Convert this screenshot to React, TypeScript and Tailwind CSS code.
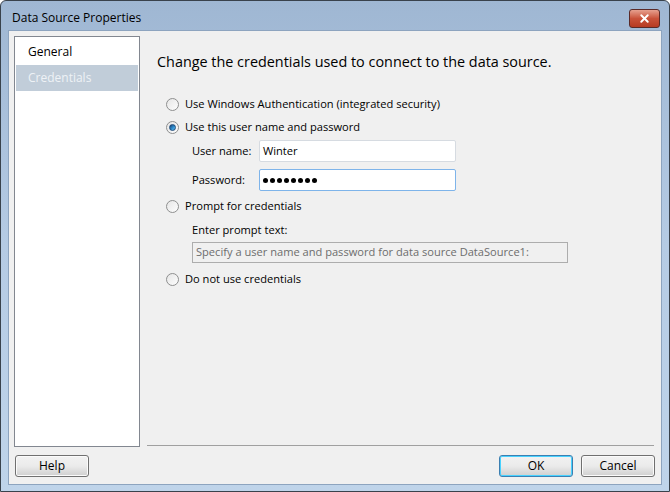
import { X } from 'lucide-react';

const Radio = ({ checked }: { checked?: boolean }) => (
  <span className="w-[13px] h-[13px] rounded-full border border-[#8e8f8f] bg-gradient-to-br from-[#e6e6e6] to-[#fdfdfd] flex items-center justify-center shrink-0">
    {checked && (
      <span className="w-[7px] h-[7px] rounded-full bg-gradient-to-br from-[#1a3e6b] via-[#2a86c8] to-[#5fc1f2] border border-[#1d4a7a]" />
    )}
  </span>
);

const WinButton = ({ label, focused, className = '' }: { label: string; focused?: boolean; className?: string }) => (
  <div
    className={`w-[74px] h-[22px] rounded-[3px] border flex items-center justify-center text-[12px] text-black ${
      focused
        ? 'border-[#3c7fb1] shadow-[inset_0_0_0_1px_#48d2ff] bg-gradient-to-b from-[#f2f2f2] via-[#ebebeb] to-[#cfcfcf]'
        : 'border-[#707070] shadow-[inset_0_0_0_1px_#fbfbfb] bg-gradient-to-b from-[#f2f2f2] via-[#ebebeb] to-[#cfcfcf]'
    } ${className}`}
  >
    {label}
  </div>
);

const dots = [0, 1, 2, 3, 4, 5, 6, 7];

export default function App() {
  return (
    <div
      className="w-[670px] h-[492px] flex flex-col border border-[#39424c] rounded-t-[6px] bg-gradient-to-b from-[#9fb7d3] via-[#b5cbe4] to-[#bfd4ea] overflow-hidden"
      style={{ fontFamily: '"Open Sans", "Liberation Sans", sans-serif' }}
    >
      {/* Title bar */}
      <div className="h-[29px] flex items-start pt-[8px] pl-[11px] pr-[9px] shrink-0">
        <span className="text-[12px] leading-[18px] text-black flex-1">Data Source Properties</span>
        <div className="w-[31px] h-[19px] rounded-[3px] border border-[#5a2a28] bg-gradient-to-b from-[#e6a08f] via-[#c9523a] to-[#b63a22] flex items-center justify-center">
          <X className="w-[13px] h-[13px] text-white" strokeWidth={3.5} />
        </div>
      </div>

      {/* Client */}
      <div className="flex-1 mx-[7px] mb-[7px] bg-[#f0f0f0] border border-[#8da4bf] flex flex-col pl-[5px] pr-[6px] pt-[5px] pb-[7px]">
        <div className="h-[411px] flex">
          <div className="w-[126px] h-full bg-white border border-[#828790] flex flex-col pt-[1px] px-[1px]">
            <div className="h-[27px] flex items-center px-[12px] text-[12px] text-black">General</div>
            <div className="h-[26px] flex items-center px-[12px] text-[12px] text-[#eef2f6] bg-[#c1cdd9]">Credentials</div>
          </div>

          <div className="flex-1 ml-[7px] flex flex-col">
            <div className="flex-1 flex flex-col pl-[10px] text-[11.1px] text-black">
              <div className="text-[14.4px] mt-[15px] h-[21px] leading-[21px]">
                Change the credentials used to connect to the data source.
              </div>

              <div className="mt-[23px] flex items-center gap-[6px] h-[18px] pl-[9px]">
                <Radio />
                <span>Use Windows Authentication (integrated security)</span>
              </div>
              <div className="mt-[5px] flex items-center gap-[6px] h-[18px] pl-[9px]">
                <Radio checked />
                <span>Use this user name and password</span>
              </div>

              <div className="mt-[4px] flex items-center h-[22px] pl-[35px]">
                <span className="w-[67px]">User name:</span>
                <div className="w-[197px] h-[22px] bg-white border border-[#d6dbe1] rounded-[2px] flex items-center px-[3px]">Winter</div>
              </div>
              <div className="mt-[7px] flex items-center h-[22px] pl-[35px]">
                <span className="w-[67px]">Password:</span>
                <div className="w-[197px] h-[22px] bg-white border border-[#7eb4ea] rounded-[2px] flex items-center pl-[3px] gap-[2px]">
                  {dots.map((d) => (
                    <span key={d} className="w-[5px] h-[5px] rounded-full bg-black" />
                  ))}
                </div>
              </div>

              <div className="mt-[6px] flex items-center gap-[6px] h-[18px] pl-[9px]">
                <Radio />
                <span>Prompt for credentials</span>
              </div>
              <div className="mt-[6px] h-[18px] flex items-center pl-[35px]">Enter prompt text:</div>
              <div className="mt-[3px] ml-[35px] w-[376px] h-[21px] bg-[#f0f0f0] border border-[#adadad] flex items-center px-[3px] text-[#6d6d6d]">
                Specify a user name and password for data source DataSource1:
              </div>
              <div className="mt-[7px] flex items-center gap-[6px] h-[18px] pl-[9px]">
                <Radio />
                <span>Do not use credentials</span>
              </div>
            </div>
            <div className="h-[1px] bg-[#a0a0a0] mb-[1px] mr-[1px]" />
          </div>
        </div>

        <div className="mt-[8px] flex items-center">
          <WinButton label="Help" className="ml-[1px]" />
          <div className="flex-1" />
          <WinButton label="OK" focused />
          <WinButton label="Cancel" className="ml-[8px]" />
        </div>
      </div>
    </div>
  );
}
